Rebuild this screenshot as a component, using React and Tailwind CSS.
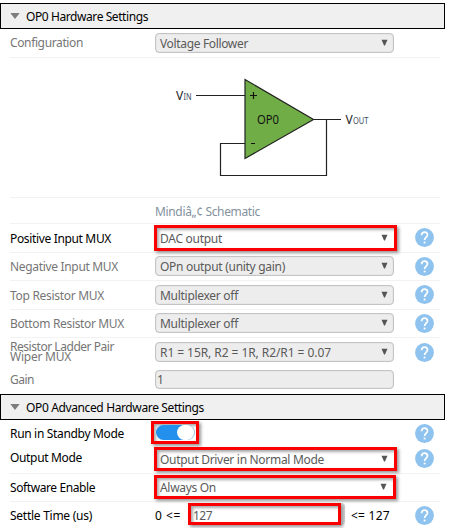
import { useLayoutEffect, useRef } from "react";
import clsx from "clsx";

// Text set to a fixed measure: tracking is derived from its natural width.
function Fit({ w, className, children }) {
  const ref = useRef(null);
  useLayoutEffect(() => {
    const el = ref.current;
    el.style.letterSpacing = "0px";
    const natural = el.getBoundingClientRect().width;
    el.style.letterSpacing = (w - natural) / children.length + "px";
  }, [w, children]);
  return (
    <span ref={ref} className={clsx("inline-block whitespace-pre", className)}>
      {children}
    </span>
  );
}

function Header({ w, children }) {
  return (
    <div className="flex h-[26px] w-[445px] shrink-0 items-center border border-black bg-[#f0f0f0] pl-[9px]">
      <svg width="10" height="6" className="mr-[6px]">
        <path d="M0.3 0H9.7L5 6Z" fill="#7c7c7c" />
      </svg>
      <Fit w={w} className="pt-px text-black">{children}</Fit>
    </div>
  );
}

function Help({ className }) {
  return (
    <svg width="19" height="19" viewBox="0 0 19 19" className={clsx("ml-auto mr-[6px] shrink-0", className)}>
      <circle cx="9.5" cy="9.5" r="9.4" fill="#8fc3ef" />
      <path d="M6.6 7.2C6.6 5.2 7.8 4.2 9.5 4.2S12.5 5.3 12.5 6.9C12.5 9 9.6 9.2 9.6 12" fill="none" stroke="#fff" strokeWidth="1.7" />
      <rect x="8.7" y="13.6" width="1.8" height="1.8" fill="#fff" />
    </svg>
  );
}

function Arrow({ className }) {
  return (
    <svg width="7" height="7" className={clsx("ml-auto -mt-[2px] shrink-0", className)}>
      <path d="M0.5 0.7H6.5L4 6.4H3Z" fill="#555" />
    </svg>
  );
}

function Select({ w, children }) {
  return (
    <div className="flex h-5 w-[239px] shrink-0 items-center rounded-[4px] border border-[#c4c4c4] bg-[#ededed] pl-1 shadow-[inset_0_0_1px_#bbb]">
      <Fit w={w} className="relative top-px text-[#5a5a5a]">{children}</Fit>
      <Arrow className="mr-[5px]" />
    </div>
  );
}

const redBox = "border-[3px] border-[#fb0000] bg-white shadow-[2px_2px_3px_#999,inset_2px_2px_3px_#aaa]";

function RedSelect({ w, className, children }) {
  return (
    <div className={clsx("-ml-px flex shrink-0 items-center pl-[3px]", redBox, className)}>
      <Fit w={w} className="relative top-px text-[#5a5a5a]">{children}</Fit>
      <Arrow className="mr-[6px]" />
    </div>
  );
}

function Row({ label, w, dark, line = true, className, labelClass, children }) {
  return (
    <div className={clsx("ml-[10px] flex w-[430px] shrink-0 items-start border-b", line ? "border-[#f2f2f2]" : "border-transparent", className)}>
      <div className={clsx("w-[145px] shrink-0", dark ? "text-black" : "text-[#767676]", labelClass)}>
        {label && <Fit w={w}>{label}</Fit>}
      </div>
      {children}
    </div>
  );
}

function Schematic() {
  return (
    <svg width="430" height="139" viewBox="10 58 430 139" fontSize="12" fill="#111">
      <g stroke="#222" strokeWidth="1.2" fill="none">
        <path d="M196 95.5H245M314 119.5H341M326.5 119.5V175.5H220.5V143.5H245" />
        <path d="M245 79.5L313.5 119.5L245 158.5Z" fill="#70ad47" />
      </g>
      <g stroke="#111" strokeWidth="1.2">
        <path d="M250 95.5H257M253.5 92V99M251 143.5H255" />
      </g>
      <text x="176" y="99.5" fill="#222">V</text>
      <text x="183.5" y="99.5" fontSize="8.5" textLength="8" lengthAdjust="spacingAndGlyphs" fill="#3b4b60">IN</text>
      <text x="257" y="123.5" textLength="22" lengthAdjust="spacingAndGlyphs">OP0</text>
      <text x="345.5" y="123.5" fill="#222">V</text>
      <text x="353" y="123.5" fontSize="8.5" textLength="15.5" lengthAdjust="spacingAndGlyphs" fill="#3b4b60">OUT</text>
    </svg>
  );
}

export default function App() {
  return (
    <main className="flex h-[528px] w-[452px] flex-col overflow-hidden bg-white pt-[3px] font-['Noto_Sans',sans-serif] text-[12px] leading-[16px]">
      <Header w={122}>OP0 Hardware Settings</Header>
      <Row label="Configuration" w={73} className="h-[29px] pt-1" labelClass="pt-[2px]">
        <Select w={88}>Voltage Follower</Select>
      </Row>
      <Row className="h-[140px]">
        <div className="-ml-[145px]"><Schematic /></div>
      </Row>
      <Row className="h-[26px] pt-[5px]">
        <Fit w={105} className="pt-px text-[#84929e]">Mindiâ„¢ Schematic</Fit>
      </Row>
      <Row label="Positive Input MUX" w={101} dark className="h-[29px] pt-px" labelClass="pt-[6px]">
        <RedSelect w={62} className="h-[26px] w-[243px]">DAC output</RedSelect>
        <Help className="mt-[3px]" />
      </Row>
      <Row label="Negative Input MUX" w={108} className="h-[28px] pt-[3px]" labelClass="pt-[3px]">
        <Select w={125}>OPn output (unity gain)</Select>
        <Help className="mt-px" />
      </Row>
      <Row label="Top Resistor MUX" w={94} className="h-[29px] pt-[4px]" labelClass="pt-[3px]">
        <Select w={78}>Multiplexer off</Select>
        <Help />
      </Row>
      <Row label="Bottom Resistor MUX" w={114} className="h-[28px] pt-[3px]" labelClass="pt-[3px]">
        <Select w={78}>Multiplexer off</Select>
        <Help className="mt-px" />
      </Row>
      <Row line={false} className="h-[29px] pt-[4px]">
        <div className="-ml-[145px] flex w-[145px] shrink-0 flex-col items-start leading-[10px] text-[#767676]">
          <Fit w={104}>Resistor Ladder Pair</Fit>
          <Fit w={61}>Wiper MUX</Fit>
        </div>
        <Select w={171}>R1 = 15R, R2 = 1R, R2/R1 = 0.07</Select>
        <Help className="mt-px" />
      </Row>
      <Row label="Gain" w={24} line={false} className="h-[27px] pt-[3px]" labelClass="pt-[2px]">
        <div className="flex h-[19px] w-[239px] items-center rounded-[4px] border border-[#c4c4c4] bg-[#ededed] pl-px text-[#5a5a5a] shadow-[inset_0_0_1px_#bbb]">
          1
        </div>
      </Row>
      <Header w={178}>OP0 Advanced Hardware Settings</Header>
      <Row label="Run in Standby Mode" w={114} dark line={false} className="h-[26px] pt-px" labelClass="pt-[5px]">
        <div className={clsx("-ml-1 flex h-[23px] w-[48px] items-center justify-center", redBox)}>
          <div className="flex h-[15px] w-[38px] justify-end rounded-full bg-[#2490ee]">
            <div className="h-[15px] w-[17px] rounded-full bg-white shadow-[1px_0_0_#9fc6e8]" />
          </div>
        </div>
        <Help className="mt-[3px]" />
      </Row>
      <Row label="Output Mode" w={72} dark className="h-[28px] pt-px" labelClass="pt-[3px]">
        <RedSelect w={164} className="h-[24px] w-[243px]">Output Driver in Normal Mode</RedSelect>
        <Help className="mt-[2px]" />
      </Row>
      <Row label="Software Enable" w={85} dark className="h-[28px] pt-px" labelClass="pt-[5px]">
        <RedSelect w={56} className="h-[24px] w-[242px]">Always On</RedSelect>
      </Row>
      <Row label="Settle Time (us)" w={82} dark line={false} className="h-[26px] pt-px" labelClass="pt-[5px]">
        <Fit w={26} className="pt-[5px] text-black">{"0 <="}</Fit>
        <div className="ml-[7px] flex h-[22px] w-[157px] rounded-r-[4px] bg-[#d0d0d0]">
          <div className={clsx("flex h-[22px] w-[153px] items-center pl-[2px] text-[#5a5a5a]", redBox)}>
            <Fit w={19} className="relative top-[2px]">127</Fit>
          </div>
        </div>
        <Fit w={39} className="ml-[6px] pt-[5px] text-black">{"<= 127"}</Fit>
        <Help className="mt-[3px]" />
      </Row>
    </main>
  );
}
